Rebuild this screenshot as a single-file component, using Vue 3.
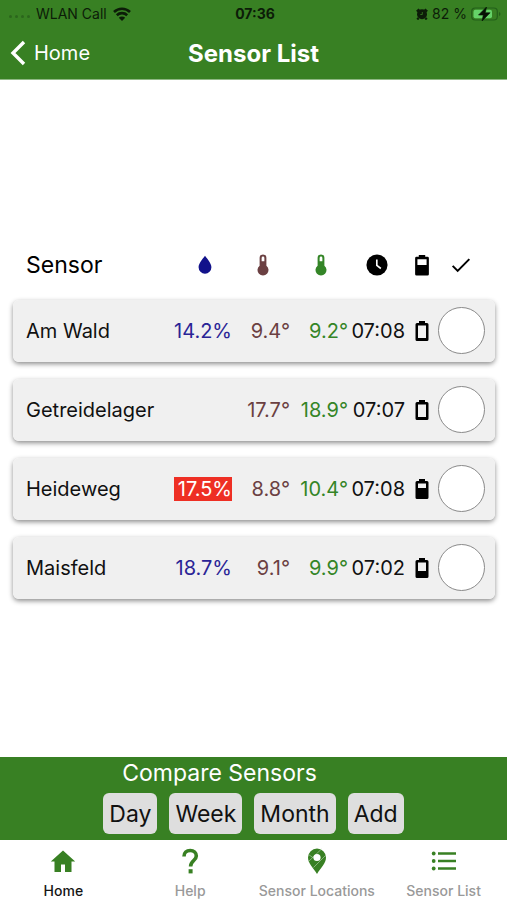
<script setup>
import { ref } from 'vue'

const sensors = [
  { name: 'Am Wald', moisture: '14.2%', inner: '9.4°', outer: '9.2°', time: '07:08', level: 1 },
  { name: 'Getreidelager', moisture: '', inner: '17.7°', outer: '18.9°', time: '07:07', level: 1 },
  { name: 'Heideweg', moisture: '17.5%', alert: true, inner: '8.8°', outer: '10.4°', time: '07:08', level: 3 },
  { name: 'Maisfeld', moisture: '18.7%', inner: '9.1°', outer: '9.9°', time: '07:02', level: 2 },
]
// Y position at which the cut-out of the battery glyph ends, by charge level
const windowEnd = { 1: 18, 2: 14, 3: 10 }
const ranges = ['Day', 'Week', 'Month', 'Add']
const selected = ref([])
</script>

<template>
  <div class="app">
    <header class="top">
      <div class="status">
        <div class="carrier">
          <span class="dots"><i></i><i></i><i></i><i></i></span>
          <span>WLAN Call</span>
          <svg class="wifi" viewBox="0 0 18 14" aria-hidden="true">
            <path d="M1 5a11.5 11.5 0 0 1 16 0M3.8 8.200a7.500 7.500 0 0 1 10.400 0" fill="none" stroke="currentColor" stroke-width="2.600" />
            <path d="M9 14 5.800 10.800a4.600 4.600 0 0 1 6.400 0z" fill="currentColor" />
          </svg>
        </div>
        <span class="clock">07:36</span>
        <div class="power">
          <svg class="alarm" viewBox="0 0 12 12" aria-hidden="true">
            <circle cx="6" cy="6.300" r="5" fill="currentColor" />
            <path d="M.8 3.500 3.300 1.200M11.200 3.500 8.700 1.200M2.500 10 1.300 11.500M9.500 10l1.200 1.500" stroke="currentColor" stroke-width="2.200" />
            <path d="M6.300 4v2.500H4.300" fill="none" stroke="#388023" stroke-width=".8" />
          </svg>
          <span>82 %</span>
          <svg class="charge" viewBox="0 0 30 14" aria-hidden="true">
            <rect x=".7" y="1" width="25.600" height="12" rx="3.500" fill="none" stroke="#23601a" stroke-width="1.200" />
            <rect x="2.500" y="2.800" width="18.500" height="8.400" rx="2" fill="#65d368" />
            <path d="M28 5v4q1.500-.5 1.500-2T28 5z" fill="#23601a" />
            <path d="M15.500 0 7.500 8h4.800l-1.200 6 8-8.200h-4.800z" fill="#071305" stroke="#071305" stroke-width=".6" />
          </svg>
        </div>
      </div>
      <nav class="bar">
        <a class="back" href="#home">
          <svg viewBox="0 0 16 26" aria-hidden="true"><path d="M14 2 3 13l11 11" fill="none" stroke="currentColor" stroke-width="3.400" /></svg>
          <span>Home</span>
        </a>
        <h1>Sensor List</h1>
        <span></span>
      </nav>
    </header>

    <main class="content">
      <table>
        <colgroup>
          <col /><col class="c-value" /><col class="c-value" /><col class="c-value" /><col class="c-time" /><col class="c-battery" /><col class="c-check" />
        </colgroup>
        <thead>
          <tr>
            <th class="name" scope="col">Sensor</th>
            <th class="measure" scope="col" aria-label="Moisture">
              <svg class="blue" viewBox="0 0 24 24"><path d="M12 2C9 6 5 10.500 5 14.500a7 7 0 0 0 14 0C19 10.500 15 6 12 2z" fill="currentColor" /></svg>
            </th>
            <th v-for="tone in ['brown', 'green']" :key="tone" class="measure" scope="col" aria-label="Temperature">
              <svg :class="tone" viewBox="0 0 24 24">
                <path d="M8.300 4.200a3.700 3.700 0 0 1 7.400 0v8.600a6 6 0 1 1-7.400 0zM12 2.800A1.500 1.500 0 0 0 10.500 4.300V8h3V4.300A1.500 1.500 0 0 0 12 2.800z" fill="currentColor" fill-rule="evenodd" />
              </svg>
            </th>
            <th scope="col" aria-label="Time">
              <svg viewBox="0 0 24 24"><circle cx="12" cy="12" r="11.500" fill="currentColor" /><path d="M11.800 6v6.500l4.400 3.300" fill="none" stroke="#fff" stroke-width="1.800" /></svg>
            </th>
            <th scope="col" aria-label="Battery">
              <svg viewBox="0 0 24 24"><path d="M8.500 1h7v2H18q1.500 0 1.500 1.500V22q0 1.500-1.500 1.500H6Q4.500 23.500 4.500 22V4.500Q4.500 3 6 3h2.500zM7 5.800V12h10V5.800z" fill="currentColor" fill-rule="evenodd" /></svg>
            </th>
            <th class="check" scope="col" aria-label="Selected">
              <svg viewBox="0 0 24 24"><path d="M2 13l6 6L22 5" fill="none" stroke="currentColor" stroke-width="2.400" /></svg>
            </th>
          </tr>
        </thead>
        <tbody>
          <tr v-for="(s, i) in sensors" :key="s.name">
            <td class="name"><label :for="'sensor-' + i">{{ s.name }}</label></td>
            <td class="blue"><span :class="{ alert: s.alert }">{{ s.moisture }}</span></td>
            <td class="brown">{{ s.inner }}</td>
            <td class="green">{{ s.outer }}</td>
            <td>{{ s.time }}</td>
            <td class="battery">
              <svg viewBox="0 0 14 22" aria-hidden="true">
                <path :d="`M4 1h6v2h2q1.500 0 1.500 1.500v15q0 1.500-1.500 1.500H2Q.5 21 .5 19.500v-15Q.5 3 2 3h2zM3 5.500V${windowEnd[s.level]}h8V5.500z`" fill="currentColor" fill-rule="evenodd" />
              </svg>
            </td>
            <td class="check"><input :id="'sensor-' + i" v-model="selected" type="checkbox" :value="s.name" /></td>
          </tr>
        </tbody>
      </table>
    </main>

    <section class="compare">
      <div class="group">
        <h2>Compare Sensors</h2>
        <div class="ranges">
          <button v-for="r in ranges" :key="r" type="button">{{ r }}</button>
        </div>
      </div>
    </section>

    <nav class="tabs">
      <a class="active" href="#home">
        <svg viewBox="0 0 26 26" aria-hidden="true"><path d="M13 2.500.8 13.500h3.700V24H11v-7.500h4V24h6.500V13.500h3.700z" fill="currentColor" /></svg>
        <span>Home</span>
      </a>
      <a href="#help">
        <svg viewBox="0 0 26 26" aria-hidden="true"><path d="M7 8.500C7 4.800 9.500 2.500 13.200 2.500S19.300 4.800 19.300 8C19.300 12.500 13.600 12.800 13.600 18.500" fill="none" stroke="currentColor" stroke-width="3.600" /><path d="M11.600 21.200h4v4.200h-4z" fill="currentColor" /></svg>
        <span>Help</span>
      </a>
      <a href="#locations">
        <svg viewBox="0 0 26 26" aria-hidden="true">
          <path d="M13 .5a9 9 0 0 0-9 9C4 15.500 9.500 20 13 26c3.500-6 9-10.500 9-16.500a9 9 0 0 0-9-9z" fill="currentColor" />
          <path d="M17.500 1 4.500 13.500M21.500 7.500l-12 12M4.500 6.500l5 3.500" stroke="#b9d5b1" stroke-width=".6" />
          <circle cx="13" cy="9.500" r="3.600" fill="#fff" />
        </svg>
        <span>Sensor Locations</span>
      </a>
      <a href="#list">
        <svg viewBox="0 0 26 26" aria-hidden="true">
          <path d="M7 5.500h18M7 13h18M7 20.500h18" stroke="currentColor" stroke-width="2.600" />
          <circle cx="2.700" cy="5.500" r="1.900" fill="currentColor" /><circle cx="2.700" cy="13" r="1.900" fill="currentColor" /><circle cx="2.700" cy="20.500" r="1.900" fill="currentColor" />
        </svg>
        <span>Sensor List</span>
      </a>
    </nav>
  </div>
</template>

<style>
body { margin: 0; background: #fff; }
</style>

<style scoped>
* { box-sizing: border-box; }
.app { display: flex; flex-direction: column; min-height: 100vh; font-family: Inter, "Liberation Sans", sans-serif; color: #111; }
a { color: inherit; text-decoration: none; }
svg { display: block; }
.top { background: #388023; border-bottom: 1px solid #8fb884; }
.status { display: grid; grid-template-columns: 1fr auto 1fr; align-items: center; height: 27px; padding: 0 6px 0 9px; font-size: 14px; color: #0c1c08; }
.carrier, .power { display: flex; align-items: center; gap: 6px; }
.power { justify-content: flex-end; gap: 4px; }
.dots { display: flex; gap: 3px; padding-top: 6px; }
.dots i { width: 3px; height: 3px; border-radius: 50%; background: #2b661c; }
.clock { font-weight: 700; }
.wifi { width: 18px; height: 14px; }
.alarm { width: 12px; height: 12px; }
.charge { width: 30px; height: 14px; }
.bar { display: grid; grid-template-columns: 1fr auto 1fr; align-items: center; height: 52px; padding: 0 10px; color: #fff; }
.back { display: flex; align-items: center; gap: 8px; font-size: 20px; }
.back svg { width: 16px; height: 26px; }
h1 { margin: 0; font-size: 24px; font-weight: 700; }
.content { flex: 1; display: flex; align-items: center; padding: 8px 12px 0 13px; }
table { width: 100%; table-layout: fixed; border-collapse: separate; border-spacing: 0 17px; font-size: 20px; }
.c-value { width: 58px; }
.c-time { width: 57px; }
.c-battery { width: 33px; }
.c-check { width: 57px; }
th { height: 36px; padding: 0; font-weight: 400; color: #000; }
th.measure { padding-left: 3px; }
th svg { width: 22px; height: 22px; margin: 0 auto; }
th.name { font-size: 23px; }
.name { padding-left: 13px; text-align: left; white-space: nowrap; }
tbody tr { border-radius: 6px; box-shadow: 0 2px 5px rgba(0, 0, 0, .45); }
td { height: 62px; padding: 0; background: #f0f0f0; text-align: right; white-space: nowrap; }
td.name { padding-left: 13px; text-align: left; border-radius: 6px 0 0 6px; }
.blue { color: #2a2496; }
.brown { color: #6b4042; }
.green { color: #348527; }
th .blue { color: #12128b; }
.alert { display: block; line-height: 24px; background: #ee2f24; color: #fff; }
.battery { color: #000; }
.battery svg { width: 14px; height: 22px; margin: 0 auto; }
.check { padding-right: 10px; }
th.check { padding-right: 12px; }
th.check svg { width: 20px; height: 20px; }
td.check { padding-right: 10px; border-radius: 0 6px 6px 0; }
input { display: block; appearance: none; width: 47px; height: 47px; margin: 0; border: 1px solid #8a8a8a; border-radius: 50%; background: #fff; }
input:checked { background: #388023; }
.compare { display: flex; justify-content: center; background: #388023; padding: 1px 0 6px; }
.group { display: flex; flex-direction: column; gap: 5px; }
h2 { margin: 0; padding-right: 68px; text-align: center; font-size: 23px; line-height: 30px; font-weight: 400; color: #fff; }
.ranges { display: flex; gap: 12px; }
button { height: 41px; padding: 0 6px; border: 0; border-radius: 6px; background: #dedede; color: #111; font-family: inherit; font-size: 23px; }
.tabs { display: grid; grid-template-columns: repeat(4, 1fr); height: 60px; padding-top: 8px; background: #fff; }
.tabs a { display: flex; flex-direction: column; align-items: center; gap: 8px; font-size: 14px; line-height: 18px; font-weight: 500; color: #999; white-space: nowrap; }
.tabs a.active { color: #151515; }
.tabs svg { width: 26px; height: 26px; color: #388023; }
</style>
